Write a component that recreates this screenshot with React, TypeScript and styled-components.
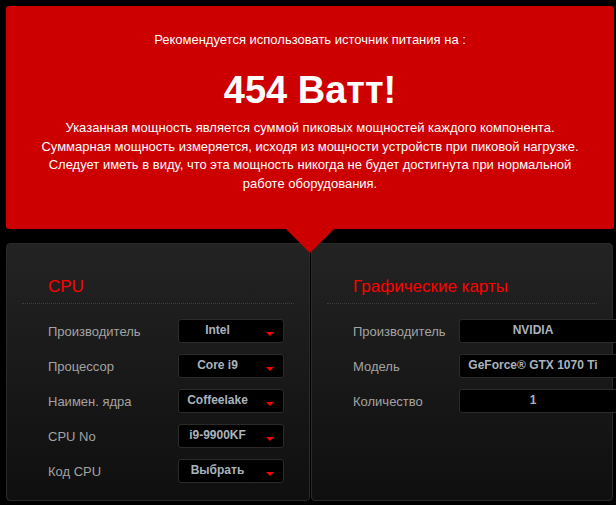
import React from "react";
import styled, { createGlobalStyle } from "styled-components";

const Global = createGlobalStyle`
  html, body { margin: 0; padding: 0; background: #000; overflow: hidden; }
  body { font-family: "Liberation Sans", Arial, sans-serif; }
  * { box-sizing: border-box; }
`;

const Page = styled.div`
  width: 616px;
  height: 505px;
  padding: 6px 2px 0 6px;
  background: #000;
`;

const Banner = styled.div`
  position: relative;
  height: 223px;
  width: 608px;
  background: #cc0000;
  border-radius: 3px;
  padding: 26px 30px 0;
  text-align: center;
  color: #fff;
`;

const Lead = styled.div`
  font-size: 13px;
  line-height: 15px;
`;

const Watt = styled.div`
  margin-top: 21px;
  font-size: 38px;
  line-height: 44px;
  font-weight: bold;
`;

const Note = styled.p`
  margin: 7px auto 0;
  max-width: 550px;
  font-size: 13px;
  line-height: 18.7px;
`;

const Pointer = styled.div`
  position: absolute;
  left: 50%;
  bottom: -24px;
  margin-left: -24px;
  width: 0;
  height: 0;
  border-left: 24px solid transparent;
  border-right: 24px solid transparent;
  border-top: 24px solid #cc0000;
  z-index: 2;
`;

const Panels = styled.div`
  display: flex;
  gap: 1px;
  margin-top: 14px;
`;

const Panel = styled.section<{ $w: number }>`
  width: ${(p) => p.$w}px;
  height: 258px;
  flex: none;
  border: 1px solid #2a2a2a;
  border-radius: 4px;
  background: linear-gradient(#232323, #0f0f0f);
`;

const Head = styled.div`
  margin: 33px 15px 0;
  padding: 0 0 6px 26px;
  border-bottom: 1px dotted #3e3e3e;
`;

const Title = styled.h2`
  margin: 0;
  font-size: 17px;
  line-height: 20px;
  font-weight: normal;
  color: #ff0000;
`;

const Rows = styled.div`
  display: flex;
  flex-direction: column;
  gap: 11px;
  padding: 15px 0 0 41px;
`;

const Row = styled.div<{ $label: number }>`
  display: grid;
  grid-template-columns: ${(p) => p.$label}px auto;
  align-items: center;
`;

const Label = styled.span`
  font-size: 13px;
  color: #a3a3a3;
`;

const Select = styled.div<{ $w: number }>`
  position: relative;
  width: ${(p) => p.$w}px;
  height: 24px;
  padding: 0 27px 2px 0;
  background: #000;
  border: 1px solid #2b2b2b;
  border-radius: 3px;
  display: flex;
  align-items: center;
  justify-content: center;
  font-size: 12px;
  font-weight: bold;
  color: #a9b3bd;
  white-space: nowrap;
`;

const Arrow = styled.i`
  position: absolute;
  right: 9px;
  top: 12px;
  width: 0;
  height: 0;
  border-left: 4px solid transparent;
  border-right: 4px solid transparent;
  border-top: 4px solid #ff0000;
`;

type Field = [string, string];

const cpu: Field[] = [
  ["Производитель", "Intel"],
  ["Процессор", "Core i9"],
  ["Наимен. ядра", "Coffeelake"],
  ["CPU No", "i9-9900KF"],
  ["Код CPU", "Выбрать"],
];

const gpu: Field[] = [
  ["Производитель", "NVIDIA"],
  ["Модель", "GeForce® GTX 1070 Ti"],
  ["Количество", "1"],
];

function Group({
  title,
  fields,
  width,
  labelW,
  selectW,
}: {
  title: string;
  fields: Field[];
  width: number;
  labelW: number;
  selectW: number;
}) {
  return (
    <Panel $w={width}>
      <Head>
        <Title>{title}</Title>
      </Head>
      <Rows>
        {fields.map(([l, v]) => (
          <Row key={l} $label={labelW}>
            <Label>{l}</Label>
            <Select $w={selectW}>
              {v}
              <Arrow />
            </Select>
          </Row>
        ))}
      </Rows>
    </Panel>
  );
}

export default function App() {
  return (
    <>
      <Global />
      <Page>
        <Banner>
          <Lead>Рекомендуется использовать источник питания на :</Lead>
          <Watt>454 Ватт!</Watt>
          <Note>
            Указанная мощность является суммой пиковых мощностей каждого компонента.
            Суммарная мощность измеряется, исходя из мощности устройств при пиковой нагрузке.
            Следует иметь в виду, что эта мощность никогда не будет достигнута при нормальной
            работе оборудования.
          </Note>
          <Pointer />
        </Banner>
        <Panels>
          <Group title="CPU" fields={cpu} width={304} labelW={130} selectW={106} />
          <Group title="Графические карты" fields={gpu} width={302} labelW={106} selectW={175} />
        </Panels>
      </Page>
    </>
  );
}
